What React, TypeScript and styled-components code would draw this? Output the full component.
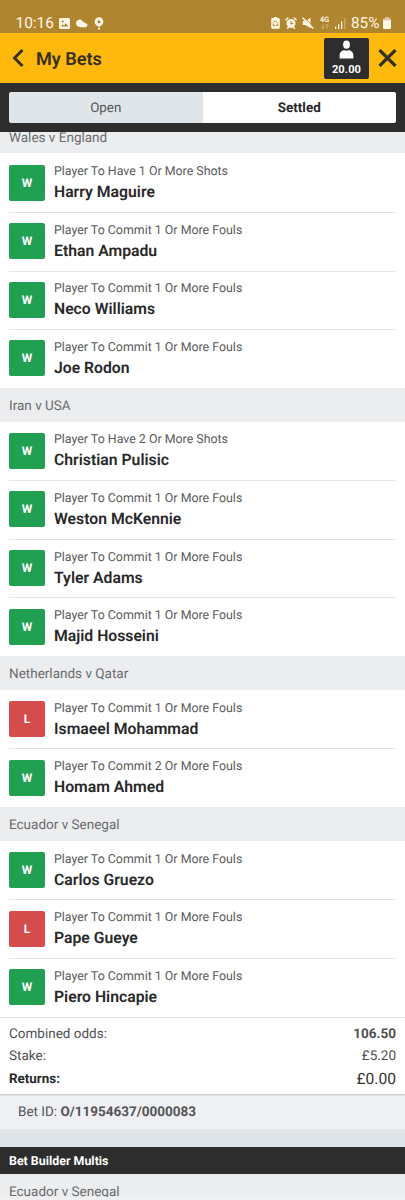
import React from "react";
import styled, { createGlobalStyle } from "styled-components";

const Global = createGlobalStyle`
  * { box-sizing: border-box; }
  body {
    margin: 0;
    background: #fff;
    font-family: Roboto, "Liberation Sans", sans-serif;
    text-rendering: geometricPrecision;
  }
`;

const Screen = styled.div`
  width: 405px;
  height: 1200px;
  overflow: hidden;
  display: flex;
  flex-direction: column;
  color: #282828;
`;

const StatusBar = styled.div`
  height: 33px;
  flex: none;
  display: flex;
  align-items: flex-end;
  justify-content: space-between;
  padding: 0 14px 0 15.5px;
  background: #b08530;
  color: #fff6e4;
`;

const StatusGroup = styled.div<{ $gap: number }>`
  display: flex;
  align-items: center;
  height: 20px;
  gap: ${(p) => p.$gap}px;
`;

const Clock = styled.span`
  font-size: 15.4px;
  line-height: 20px;
  width: 37px;
  white-space: nowrap;
`;

const Battery = styled.span`
  font-size: 15.3px;
  line-height: 20px;
  width: 27px;
  white-space: nowrap;
`;

const Icon = styled.svg`
  display: block;
  flex: none;
`;

const Header = styled.header`
  height: 50px;
  flex: none;
  display: flex;
  align-items: center;
  padding: 0 8px 0 12px;
  background: #ffb80c;
`;

const Title = styled.h1`
  margin: 3px 0 0 12px;
  flex: 1;
  font-size: 18.1px;
  line-height: 24px;
  font-weight: 600;
  color: #35301f;
`;

const Account = styled.div`
  width: 45px;
  height: 41px;
  margin-right: 9px;
  padding-top: 2.5px;
  border-radius: 2px;
  background: #2d2d2d;
  display: flex;
  flex-direction: column;
  align-items: center;
  color: #fff;
`;

const Balance = styled.span`
  margin-top: 4px;
  font-size: 11.1px;
  line-height: 14px;
  font-weight: 700;
  letter-spacing: 0.1px;
`;

const TabBar = styled.div`
  height: 49px;
  flex: none;
  padding: 8.5px 9px;
  background: #2d2d2d;
`;

const Tabs = styled.div`
  display: flex;
  height: 31.5px;
  border-radius: 2px;
  overflow: hidden;
`;

const Tab = styled.div<{ $active?: boolean }>`
  flex: 1;
  text-align: center;
  font-size: 13.4px;
  line-height: 34.5px;
  font-weight: ${(p) => (p.$active ? 700 : 400)};
  color: ${(p) => (p.$active ? "#282828" : "#545658")};
  background: ${(p) => (p.$active ? "#fff" : "#e0e5e9")};
`;

const Scroll = styled.main`
  flex: 1;
  min-height: 0;
  overflow: hidden;
  display: flex;
  flex-direction: column;
`;

const Match = styled.div<{ $first?: boolean }>`
  flex: none;
  height: 33.8px;
  margin-top: ${(p) => (p.$first ? "-12.4px" : "0")};
  padding-left: 9px;
  font-size: 13.5px;
  line-height: 36.4px;
  color: #6a6c6e;
  background: #ecedef;
`;

const Row = styled.div`
  flex: none;
  height: 58.6px;
  margin: 0 9px;
  display: flex;
  align-items: center;
  border-top: 1px solid #e0e6ea;
  &[data-first="true"] { border-top-color: transparent; }
`;

const Badge = styled.div<{ $won: boolean }>`
  width: 36px;
  height: 36px;
  margin-top: -1px;
  border-radius: 2px;
  background: ${(p) => (p.$won ? "#20a050" : "#d54c4c")};
  color: #fff;
  text-align: center;
  font-size: 12px;
  line-height: 36px;
  font-weight: 700;
`;

const Selection = styled.div`
  margin: -2.8px 0 0 9px;
  display: flex;
  flex-direction: column;
`;

const Market = styled.span`
  font-size: 12.4px;
  line-height: 20px;
  color: #5a5a5a;
`;

const Player = styled.span`
  font-size: 15.75px;
  line-height: 19px;
  font-weight: 600;
  color: #282828;
`;

const Summary = styled.div`
  flex: none;
  height: 77.6px;
  padding: 6px 9px 0;
  border-top: 1px solid #dde3e7;
  position: relative;
  box-shadow: 0 1px 2px rgba(0, 0, 0, 0.2);
`;

const Line = styled.div<{ $h: number }>`
  display: flex;
  justify-content: space-between;
  align-items: center;
  height: ${(p) => p.$h}px;
  font-size: 13.5px;
  color: #505050;
`;

const Strong = styled.span`
  font-weight: 700;
`;

const ReturnsLabel = styled.span`
  font-size: 13.4px;
  font-weight: 700;
  color: #282828;
`;

const ReturnsValue = styled.span`
  font-size: 15.6px;
  color: #333;
`;

const BetId = styled.div`
  flex: none;
  height: 34.5px;
  padding-left: 18px;
  font-size: 13.5px;
  line-height: 37.5px;
  color: #555;
  background: #eef0f4;
`;

const Spacer = styled.div`
  flex: none;
  height: 18.5px;
  background: #e0e5e9;
`;

const SectionBar = styled.div`
  flex: none;
  height: 27px;
  padding-left: 9px;
  font-size: 12.4px;
  line-height: 29.5px;
  font-weight: 700;
  color: #fff;
  background: #2d2d2d;
`;

const BottomEdge = styled.div`
  flex: none;
  height: 3px;
  background: #eff0f2;
`;

type Bet = { market: string; player: string; won: boolean };
type Group = { match: string; bets: Bet[] };

const shots = (n: number) => `Player To Have ${n} Or More Shots`;
const fouls = (n: number) => `Player To Commit ${n} Or More Fouls`;

const groups: Group[] = [
  {
    match: "Wales v England",
    bets: [
      { market: shots(1), player: "Harry Maguire", won: true },
      { market: fouls(1), player: "Ethan Ampadu", won: true },
      { market: fouls(1), player: "Neco Williams", won: true },
      { market: fouls(1), player: "Joe Rodon", won: true },
    ],
  },
  {
    match: "Iran v USA",
    bets: [
      { market: shots(2), player: "Christian Pulisic", won: true },
      { market: fouls(1), player: "Weston McKennie", won: true },
      { market: fouls(1), player: "Tyler Adams", won: true },
      { market: fouls(1), player: "Majid Hosseini", won: true },
    ],
  },
  {
    match: "Netherlands v Qatar",
    bets: [
      { market: fouls(1), player: "Ismaeel Mohammad", won: false },
      { market: fouls(2), player: "Homam Ahmed", won: true },
    ],
  },
  {
    match: "Ecuador v Senegal",
    bets: [
      { market: fouls(1), player: "Carlos Gruezo", won: true },
      { market: fouls(1), player: "Pape Gueye", won: false },
      { market: fouls(1), player: "Piero Hincapie", won: true },
    ],
  },
];

const PictureIcon = () => (
  <Icon width="11" height="11" viewBox="0 0 11 11">
    <path fill="currentColor" fillRule="evenodd" d="M1.500 0h8A1.500 1.500 0 0 1 11 1.500v8A1.500 1.500 0 0 1 9.500 11h-8A1.500 1.500 0 0 1 0 9.500v-8A1.500 1.500 0 0 1 1.500 0ZM2 8.600h7.200L6.800 5.300 5 7.500 3.700 6.200Z" />
    <circle cx="3.700" cy="3.500" r="1.100" fill="#b08530" />
  </Icon>
);

const CloudIcon = () => (
  <Icon width="12" height="9" viewBox="0 0 12 9">
    <path fill="currentColor" d="M3.600 7.800A3.600 3.600 0 1 1 6.900 2.700 2.600 2.600 0 0 1 9.300 4.200 2 2 0 0 1 9.600 8.200H4Z" />
  </Icon>
);

const PinIcon = () => (
  <Icon width="10" height="13" viewBox="0 0 10 13">
    <path fill="currentColor" fillRule="evenodd" d="M5 .3a4.400 4.400 0 0 1 2.300 8.100L5 10 2.700 8.400A4.400 4.400 0 0 1 5 .3Zm0 2.900a1.500 1.500 0 1 0 0 3 1.500 1.500 0 0 0 0-3Z" />
    <circle cx="5" cy="11.700" r="1.100" fill="currentColor" />
  </Icon>
);

const BatterySaverIcon = () => (
  <Icon width="9" height="12" viewBox="0 0 9 12">
    <path fill="currentColor" d="M2.700 0h3.600v1H7.500A1.300 1.300 0 0 1 8.800 2.300v8.200a1.300 1.300 0 0 1-1.300 1.300h-6A1.300 1.300 0 0 1 .2 10.500V2.300A1.300 1.300 0 0 1 1.500 1h1.200Z" />
    <path fill="none" stroke="#b08530" strokeWidth="1" d="M2.800 5.600 4.500 3.800l1.700 1.800M6.700 6.500v2H4.900M2.300 6.500v2h1.600" />
  </Icon>
);

const AlarmIcon = () => (
  <Icon width="12" height="12" viewBox="0 0 12 12">
    <path stroke="currentColor" strokeWidth="1.500" strokeLinecap="round" d="m.9 2.700 2-1.700m8.200 1.700L9.100 1M2.600 11.200l.8-1m6 1-.8-1" />
    <circle cx="6" cy="6.400" r="4.500" fill="currentColor" />
    <path fill="none" stroke="#b08530" strokeWidth="1.100" d="M6 3.800v2.800h2.200" />
  </Icon>
);

const MuteIcon = () => (
  <Icon width="12" height="12" viewBox="0 0 12 12">
    <path fill="currentColor" d="M.8 4h2.700L8.500.8v10.400L3.500 8H.8Z" />
    <path stroke="#b08530" strokeWidth=".8" d="m2 0 10 10" />
    <path stroke="currentColor" strokeWidth="1.500" strokeLinecap="round" d="m.8 1 10 10" />
  </Icon>
);

const NetworkBox = styled.span`
  width: 11px;
  height: 14px;
  display: flex;
  flex-direction: column;
  align-items: center;
  font-size: 7.6px;
  line-height: 8px;
  font-weight: 600;
`;

const Network = () => (
  <NetworkBox>
    4G
    <Icon width="8" height="5" viewBox="0 0 8 5">
      <path fill="none" stroke="#d6bd8b" strokeWidth=".8" d="M2 0v4.500M.5 3 2 4.500 3.500 3M6 5V.5M4.500 2 6 .5 7.500 2" />
    </Icon>
  </NetworkBox>
);

const SignalIcon = () => (
  <Icon width="11" height="11" viewBox="0 0 11 11">
    <path fill="currentColor" d="M0 8.500h1.300V11H0zM3 6.200h1.300V11H3zM6 3.300h1.300V11H6z" />
    <path fill="#cbae72" d="M9.200 0h1.300v11H9.200z" />
  </Icon>
);

const BatteryIcon = () => (
  <Icon width="8" height="12" viewBox="0 0 8 12">
    <path fill="#dcc79e" d="M2.400 0h3.200v1.200h1.200A1.200 1.200 0 0 1 8 2.400V4H0V2.400a1.200 1.200 0 0 1 1.200-1.200h1.200Z" />
    <path fill="currentColor" d="M0 3.300h8v7.400A1.200 1.200 0 0 1 6.800 12H1.200A1.200 1.200 0 0 1 0 10.700Z" />
  </Icon>
);

const BackIcon = () => (
  <Icon width="12" height="18" viewBox="0 0 12 18">
    <path fill="none" stroke="#35301f" strokeWidth="2.900" d="m10.500 1-8 8 8 8" />
  </Icon>
);

const PersonIcon = () => (
  <Icon width="15" height="19" viewBox="0 0 15 19">
    <ellipse cx="7.500" cy="4.700" rx="3.400" ry="4.100" fill="currentColor" />
    <path fill="currentColor" d="M.6 18.500v-3.300c0-3 2-4.500 4.400-5.200a4.500 4.500 0 0 0 5 0c2.400.7 4.400 2.200 4.400 5.200v3.300Z" />
  </Icon>
);

const CloseIcon = () => (
  <Icon width="19" height="18" viewBox="0 0 19 18">
    <path stroke="#35301f" strokeWidth="3.200" d="m1.500 1 16 16m0-16-16 16" />
  </Icon>
);

export default function App() {
  return (
    <Screen>
      <Global />
      <StatusBar>
        <StatusGroup $gap={6.2}>
          <Clock>10:16</Clock>
          <PictureIcon />
          <CloudIcon />
          <PinIcon />
        </StatusGroup>
        <StatusGroup $gap={5}>
          <BatterySaverIcon />
          <AlarmIcon />
          <MuteIcon />
          <Network />
          <SignalIcon />
          <Battery>85%</Battery>
          <BatteryIcon />
        </StatusGroup>
      </StatusBar>
      <Header>
        <BackIcon />
        <Title>My Bets</Title>
        <Account>
          <PersonIcon />
          <Balance>20.00</Balance>
        </Account>
        <CloseIcon />
      </Header>
      <TabBar>
        <Tabs>
          <Tab>Open</Tab>
          <Tab $active>Settled</Tab>
        </Tabs>
      </TabBar>
      <Scroll>
        {groups.map((g, gi) => (
          <React.Fragment key={g.match}>
            <Match $first={gi === 0}>{g.match}</Match>
            {g.bets.map((b, i) => (
              <Row key={b.player} data-first={i === 0}>
                <Badge $won={b.won}>{b.won ? "W" : "L"}</Badge>
                <Selection>
                  <Market>{b.market}</Market>
                  <Player>{b.player}</Player>
                </Selection>
              </Row>
            ))}
          </React.Fragment>
        ))}
        <Summary>
          <Line $h={21.5}>
            <span>Combined odds:</span>
            <Strong>106.50</Strong>
          </Line>
          <Line $h={22}>
            <span>Stake:</span>
            <span>£5.20</span>
          </Line>
          <Line $h={24}>
            <ReturnsLabel>Returns:</ReturnsLabel>
            <ReturnsValue>£0.00</ReturnsValue>
          </Line>
        </Summary>
        <BetId>
          Bet ID: <Strong>O/11954637/0000083</Strong>
        </BetId>
        <Spacer />
        <SectionBar>Bet Builder Multis</SectionBar>
        <Match>Ecuador v Senegal</Match>
      </Scroll>
      <BottomEdge />
    </Screen>
  );
}
